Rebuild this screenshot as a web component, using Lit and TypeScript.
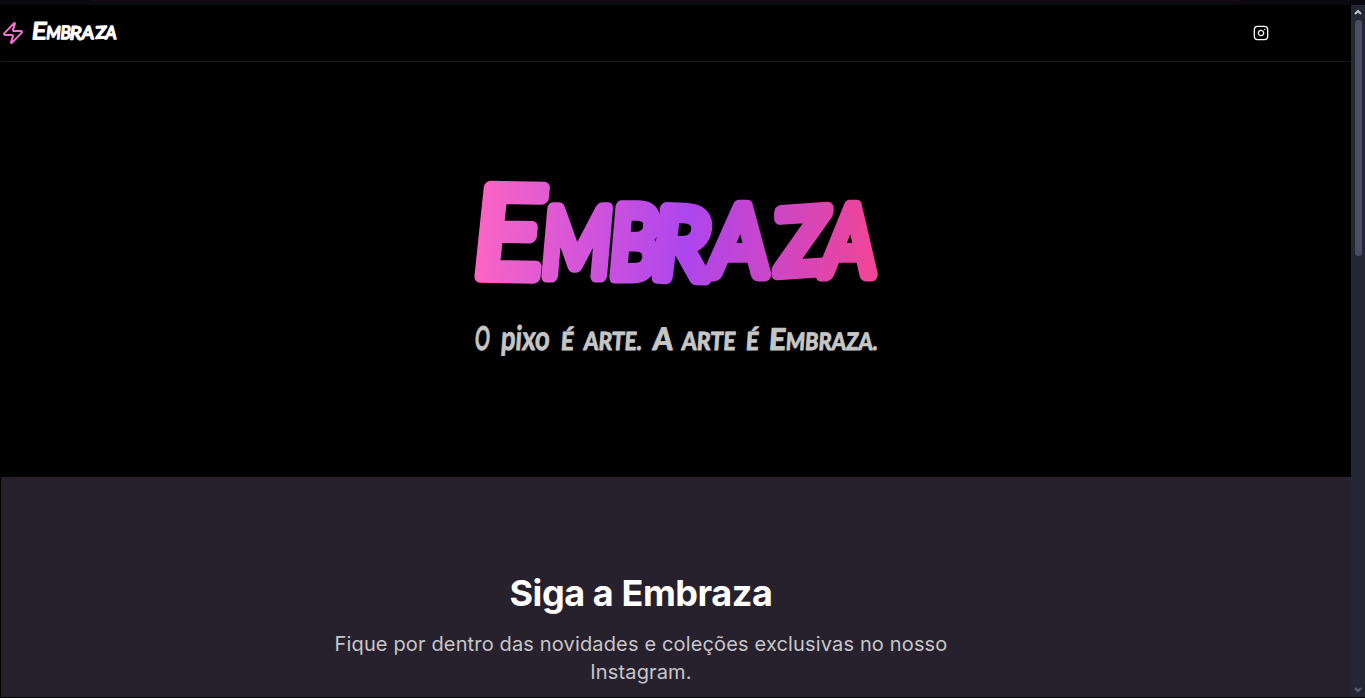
import { LitElement, html, css, svg } from "lit";
import { customElement } from "lit/decorators.js";

// [character, x, width, font size, vertical shift, tilt in degrees]
const heroLetters: [string, number, number, number, number, number][] = [
  ["E", -4, 70, 124, -5, 1],
  ["M", 66, 69, 94, -5, 0],
  ["B", 134, 49, 98, -4, 0],
  ["R", 176, 57, 96, -4, 2],
  ["A", 234, 58, 96, -6, 0],
  ["Z", 302, 53, 87, -7, -4],
  ["A", 347, 52, 96, -6, 0],
];

@customElement("app-root")
export class AppRoot extends LitElement {
  static styles = css`
    :host { display: block; height: 698px; overflow: hidden; background: #000; }
    .window { display: flex; flex-direction: column; height: 698px; box-sizing: border-box; border-bottom: 1px solid #000; }
    .chrome { flex: none; height: 5px; background: linear-gradient(#1c0b14 0 1px, transparent 1px) 92px 0 / 1148px 1px no-repeat, #0a0910; }
    .body { flex: 1; min-height: 0; display: flex; }
    .page { width: 1350px; box-sizing: border-box; margin-left: 1px; display: flex; flex-direction: column; overflow: hidden; }
    header { flex: none; height: 57px; box-sizing: border-box; border-bottom: 1px solid #18181b; display: flex; align-items: center; justify-content: space-between; padding: 0 82px 0 0; }
    .brand { display: flex; align-items: center; gap: 7px; }
    .zap { width: 24px; height: 24px; fill: none; stroke: #f472d0; stroke-width: 2; stroke-linecap: round; stroke-linejoin: round; }
    .insta { width: 16px; height: 16px; fill: none; stroke: #fff; stroke-width: 2; stroke-linecap: round; stroke-linejoin: round; overflow: visible; }
    svg { display: block; overflow: visible; }
    .brush { font-family: "Lato", "Open Sans", sans-serif; font-weight: 900; stroke-linejoin: round; stroke-linecap: round; }
    .marker { font-weight: 400; }
    .logo { width: 85px; height: 21px; margin-bottom: 4px; fill: #fff; stroke: #fff; }
    .hero { flex: none; height: 415px; display: flex; flex-direction: column; align-items: center; }
    .title { width: 404px; height: 106px; margin-top: 119px; }
    .tagline { width: 404px; height: 46px; margin-top: 37px; fill: #c6c6c6; stroke: #c6c6c6; stroke-width: .8; }
    .caps { text-transform: uppercase; }
    .follow { flex: 1; background: #27212d; }
    .copy { width: 640px; margin-left: 320px; padding-top: 96px; display: flex; flex-direction: column; align-items: center; text-align: center; font-family: "Inter", sans-serif; }
    h2 { margin: 0; font-size: 36px; line-height: 40px; font-weight: 700; color: #fff; letter-spacing: -.42px; white-space: nowrap; }
    p { margin: 17px 0 0; font-size: 20px; line-height: 28px; color: #c8c6ca; letter-spacing: .15px; }
    .line { display: block; white-space: nowrap; }
    .scroll { width: 14px; background: #242633; display: flex; flex-direction: column; align-items: center; }
    .arrow { width: 8px; height: 6px; margin-top: 4px; fill: none; stroke: #c4c5cc; stroke-width: 2; }
    .thumb { width: 7px; height: 236px; margin-top: 5px; border-radius: 4px; background: #4b4d66; }
    .down { margin-top: auto; margin-bottom: 4px; stroke: #62636b; }
  `;

  private letters() {
    return heroLetters.map(([c, x, w, size, dy, tilt]) => svg`<tspan x=${x} y=${100 + dy} rotate=${tilt} font-size=${size} textLength=${w} lengthAdjust="spacingAndGlyphs">${c}</tspan>`);
  }

  render() {
    return html`<div class="window">
      <div class="chrome"></div>
      <div class="body">
        <main class="page">
          <header>
            <div class="brand">
              <svg class="zap" viewBox="0 0 24 24"><path d="M4 14a1 1 0 0 1-.78-1.63l9.9-10.2a.5.5 0 0 1 .86.46l-1.92 6.02A1 1 0 0 0 13 10h7a1 1 0 0 1 .78 1.63l-9.9 10.2a.5.5 0 0 1-.86-.46l1.92-6.02A1 1 0 0 0 11 14z"/></svg>
              <svg class="logo" viewBox="0 0 404 111" preserveAspectRatio="none">
                <text class="brush marker" stroke-width="9" transform="translate(8 0) skewX(-5)">${this.letters()}</text>
              </svg>
            </div>
            <svg class="insta" viewBox="0 0 24 24"><rect x="2" y="2" width="20" height="20" rx="5"/><path d="M16 11.37A4 4 0 1 1 12.63 8 4 4 0 0 1 16 11.37z"/><path d="M17.5 6.5h.01"/></svg>
          </header>
          <section class="hero">
            <svg class="title" viewBox="0 0 404 106">
              <defs><linearGradient id="ink" gradientUnits="userSpaceOnUse" x1="0" y1="0" x2="404" y2="0">
                <stop offset="0" stop-color="#fb64c4"/><stop offset=".52" stop-color="#ad46ee"/><stop offset="1" stop-color="#f24594"/>
              </linearGradient></defs>
              <text class="brush marker" fill="url(#ink)" stroke="url(#ink)" stroke-width="13" transform="translate(8 0) skewX(-5)">${this.letters()}</text>
            </svg>
            <svg class="tagline" viewBox="0 0 404 46">
              <text class="brush" y="26" font-size="25" transform="translate(2 0) skewX(-4)">
                <tspan x="0" font-size="33" font-weight="700" textLength="15" lengthAdjust="spacingAndGlyphs">O</tspan>
                <tspan x="26" font-size="34" font-weight="700" textLength="49" lengthAdjust="spacingAndGlyphs">pixo</tspan>
                <tspan x="86" class="caps" textLength="13" lengthAdjust="spacingAndGlyphs">é</tspan>
                <tspan x="109" class="caps" textLength="58" lengthAdjust="spacingAndGlyphs">arte.</tspan>
                <tspan x="178" font-size="31" textLength="20" lengthAdjust="spacingAndGlyphs">A</tspan>
                <tspan x="207" class="caps" textLength="54" lengthAdjust="spacingAndGlyphs">arte</tspan>
                <tspan x="271" class="caps" textLength="13" lengthAdjust="spacingAndGlyphs">é</tspan>
                <tspan x="294" font-size="30" textLength="17" lengthAdjust="spacingAndGlyphs">E</tspan><tspan x="311" class="caps" font-size="24" textLength="92" lengthAdjust="spacingAndGlyphs">mbraza.</tspan>
              </text>
            </svg>
          </section>
          <section class="follow"><div class="copy">
            <h2>Siga a Embraza</h2>
            <p><span class="line">Fique por dentro das novidades e coleções exclusivas no nosso</span><span class="line">Instagram.</span></p>
          </div></section>
        </main>
        <aside class="scroll">
          <svg class="arrow" viewBox="0 0 8 6"><path d="M1 5l3-3 3 3"/></svg>
          <div class="thumb"></div>
          <svg class="arrow down" viewBox="0 0 8 6"><path d="M1 1l3 3 3-3"/></svg>
        </aside>
      </div>
    </div>`;
  }
}
